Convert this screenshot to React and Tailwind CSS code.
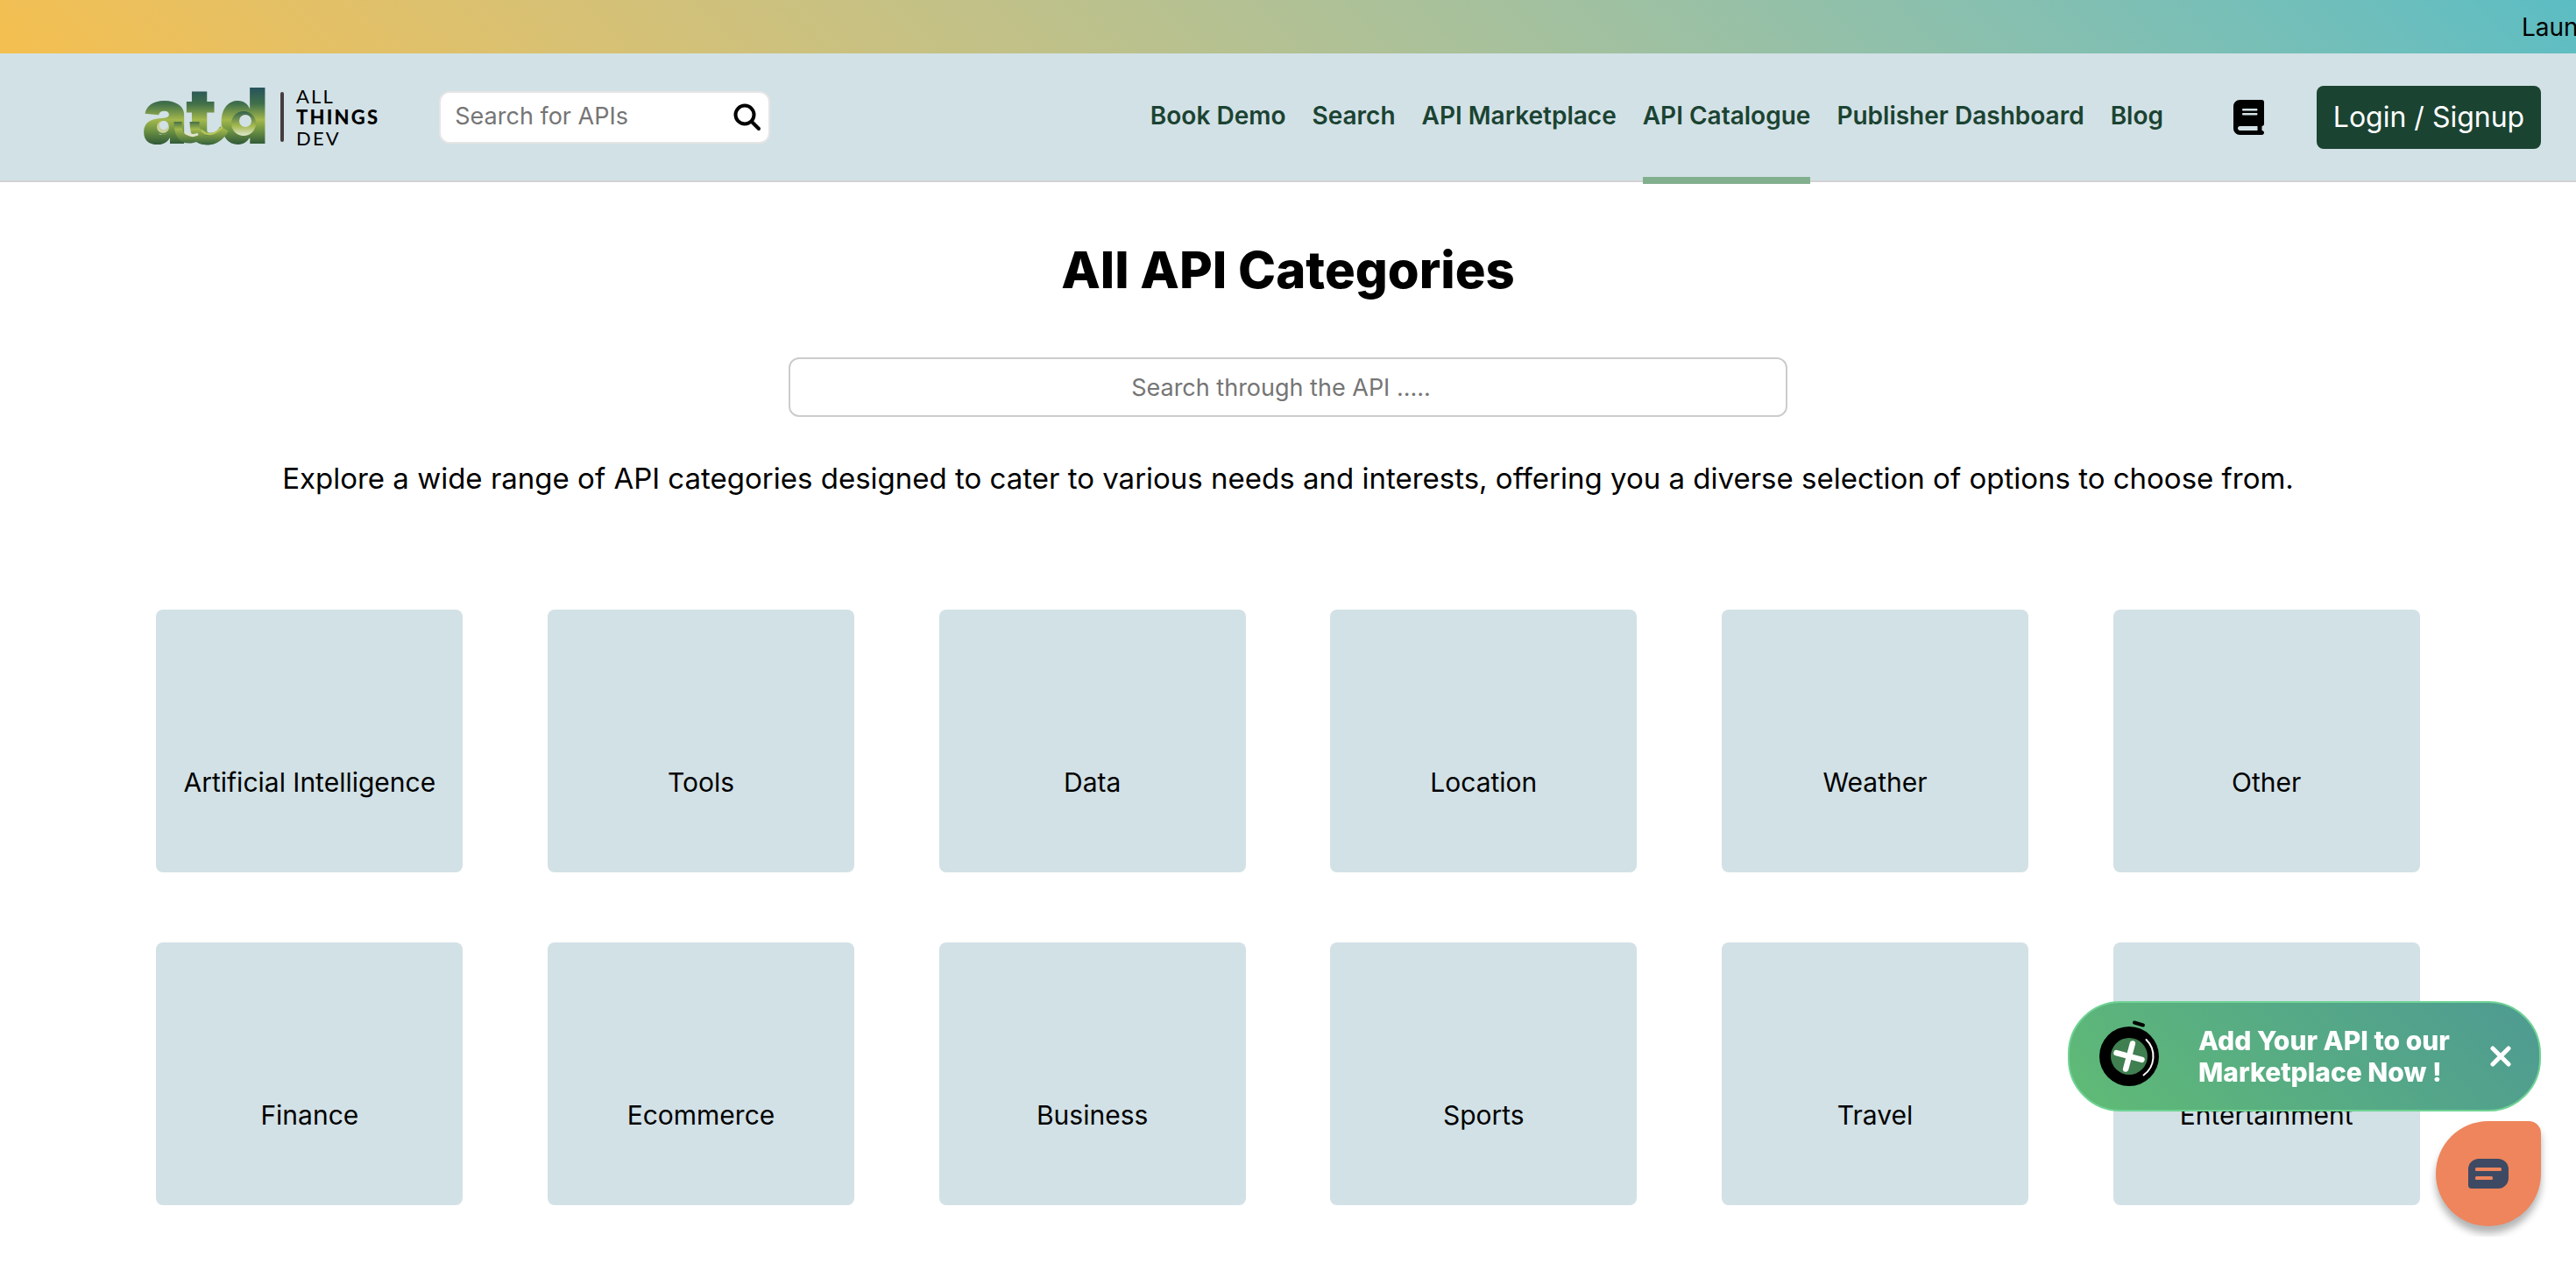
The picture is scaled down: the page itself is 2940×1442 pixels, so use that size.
import { FaBook } from "react-icons/fa6";

const links = ["Book Demo", "Search", "API Marketplace", "API Catalogue", "Publisher Dashboard", "Blog"];

const categories = [
  "Artificial Intelligence", "Tools", "Data", "Location", "Weather", "Other",
  "Finance", "Ecommerce", "Business", "Sports", "Travel", "Entertainment",
];

function Logo() {
  return (
    <a href="#" aria-label="All Things Dev" className="flex shrink-0 items-center">
      <svg viewBox="0 0 148 70" className="h-[70px] w-[148px] overflow-visible" aria-hidden="true">
        <defs>
          <linearGradient id="mark" x1="0" y1="0" x2="0" y2="70" gradientUnits="userSpaceOnUse">
            <stop offset="0" stopColor="#24515c" />
            <stop offset="0.28" stopColor="#41704a" />
            <stop offset="0.54" stopColor="#a3b84c" />
            <stop offset="0.72" stopColor="#6c9142" />
            <stop offset="1" stopColor="#1f4a36" />
          </linearGradient>
          <linearGradient id="hook" x1="0" y1="38" x2="0" y2="68" gradientUnits="userSpaceOnUse">
            <stop offset="0" stopColor="#2f5f45" />
            <stop offset="0.35" stopColor="#a3b84c" />
            <stop offset="1" stopColor="#2a5a3a" />
          </linearGradient>
          <linearGradient id="hole" x1="0" y1="27" x2="0" y2="56" gradientUnits="userSpaceOnUse">
            <stop offset="0" stopColor="#2b5b50" />
            <stop offset="0.6" stopColor="#a3b84c" />
            <stop offset="1" stopColor="#dfe6cf" />
          </linearGradient>
        </defs>
        <text y="65" x="2 52 90" fontFamily="Inter, sans-serif" fontWeight="900" fontSize="88" fill="url(#mark)">atd</text>
        <path d="M43 40C43 55 48 61 58 60C65 59 70 56 73 50" fill="none" stroke="url(#hook)" strokeWidth="9" />
        <path d="M62 40C62 56 68 62 78 61C87 60 92 55 96 48" fill="none" stroke="url(#hook)" strokeWidth="11" />
        <path d="M52 52Q58 58 66 54" fill="none" stroke="#dfe3cb" strokeWidth="3" />
        <path d="M70 50Q80 60 94 46" fill="none" stroke="#b6c65f" strokeWidth="2" />
        <circle cx="26" cy="46" r="9" fill="url(#mark)" />
        <circle cx="26" cy="46" r="7" fill="#c8d09b" />
        <circle cx="27" cy="44" r="5" fill="#d2e1e6" />
        <circle cx="118" cy="42" r="18" fill="url(#mark)" />
        <circle cx="118" cy="42" r="14" fill="url(#hole)" />
        <circle cx="120" cy="39" r="7" fill="#d2e1e6" />
      </svg>
      <span className="ml-3 h-[57px] w-1 rounded-full bg-[#463c3e]" />
      <span className="ml-[14px] flex flex-col font-[Lato,sans-serif] text-[22px] leading-6 tracking-widest">
        <span>ALL</span>
        <span className="font-black">THINGS</span>
        <span>DEV</span>
      </span>
    </a>
  );
}

function SearchIcon() {
  return (
    <svg viewBox="0 0 32 32" className="size-8" fill="none" stroke="currentColor" strokeWidth="4" strokeLinecap="round" aria-hidden="true">
      <circle cx="13" cy="13" r="10.5" />
      <path d="M21 21l8 8" />
    </svg>
  );
}

function AddBadge() {
  return (
    <svg viewBox="0 0 70 92" className="h-[92px] w-[70px]" fill="none" strokeLinecap="round" aria-hidden="true">
      <path d="M41 7.5l10 3" stroke="#000" strokeWidth="4" />
      <circle cx="35" cy="46" r="34" fill="#000" />
      <circle cx="35" cy="46" r="21" fill="#3f7f50" />
      <path d="M54.5 27A26.5 26.5 0 0 1 51.5 67.5" stroke="#fff" strokeWidth="2" />
      <g stroke="#fff" strokeWidth="6.5" transform="rotate(15 35 46)">
        <path d="M35 31v30M20 46h30" />
      </g>
    </svg>
  );
}

export default function App() {
  return (
    <div className="min-h-screen overflow-x-hidden bg-white font-[Inter,sans-serif] text-black">
      <div className="flex h-[61px] items-center justify-end overflow-hidden bg-linear-45 from-[#f4bf4f] to-[#5bbdc3]">
        <p className="w-[62px] whitespace-nowrap text-[28px]">Laun</p>
      </div>
      <header className="flex h-[147px] items-center border-b-2 border-[#d3d3d3] bg-[#d2e1e6] pr-10 pl-40">
        <Logo />
        <form className="ml-[68px] flex h-[60px] w-[378px] items-center rounded-xl border-2 border-[#e5e5e5] bg-white pr-2 pl-4">
          <input aria-label="Search for APIs" placeholder="Search for APIs" className="min-w-0 flex-1 text-[27px] outline-none placeholder:text-[#757575]" />
          <button type="button" aria-label="Search"><SearchIcon /></button>
        </form>
        <nav className="ml-auto flex items-stretch gap-[30px] self-stretch text-[28px] font-semibold text-[#1b4332]">
          {links.map((label) => (
            <a
              key={label}
              href="#"
              className={
                label === "API Catalogue"
                  ? "relative flex items-center pb-1 after:absolute after:inset-x-0 after:-bottom-1 after:h-2 after:bg-[#82b08f]"
                  : "flex items-center pb-1"
              }
            >
              {label}
            </a>
          ))}
        </nav>
        <a href="#" aria-label="Documentation" className="ml-20"><FaBook className="h-10 w-[35px]" /></a>
        <button type="button" className="ml-[60px] h-[72px] w-64 rounded-lg bg-[#1b4332] text-[32px] whitespace-nowrap text-white">Login / Signup</button>
      </header>
      <main className="flex flex-col items-center">
        <h1 className="mt-16 text-[58px] leading-[72px] font-extrabold">All API Categories</h1>
        <input aria-label="Search through the API" placeholder="Search through the API ....." className="mt-16 h-[68px] w-[1140px] max-w-full rounded-xl border-2 border-[#cccccc] pr-4 text-center text-[27px] placeholder:text-[#757575]" />
        <p className="mt-[46px] text-center text-[33px] leading-12">Explore a wide range of API categories designed to cater to various needs and interests, offering you a diverse selection of options to choose from.</p>
        <ul className="mt-[126px] grid w-full grid-cols-6 justify-items-center gap-y-20 px-[130px]">
          {categories.map((name) => (
            <li key={name} className="w-[350px]">
              <a href="#" className="flex h-[300px] items-end justify-center rounded-lg bg-[#d2e1e6] pb-20 text-[30px]">{name}</a>
            </li>
          ))}
        </ul>
      </main>

      <aside className="fixed right-7 bottom-[30px] flex flex-col items-end">
        <div className="mr-3 flex h-[126px] w-[540px] items-center rounded-[60px] border-2 border-[#6fd394] bg-linear-45 from-[#60bb74] to-[#4e9a92] pr-8 pl-[33px]">
          <AddBadge />
          <a href="#" className="ml-11 text-[30px] leading-9 font-extrabold whitespace-nowrap text-white">
            Add Your API to our
            <br />
            Marketplace Now !
          </a>
          <button type="button" aria-label="Close" className="ml-auto text-white">
            <svg viewBox="0 0 24 24" className="size-6" stroke="currentColor" strokeWidth="5" strokeLinecap="round" aria-hidden="true">
              <path d="M3 3l18 18M21 3L3 21" />
            </svg>
          </button>
        </div>
        <div className="overflow-hidden px-3 pt-[11px] pb-3">
          <button type="button" aria-label="Open chat" className="flex size-[120px] items-center justify-center rounded-[60px] rounded-tr-[14px] bg-[#ee855c] shadow-[0_8px_8px_rgba(0,0,0,0.3)]">
            <svg viewBox="0 0 46 34" className="h-[34px] w-[46px]" aria-hidden="true">
              <path d="M12 0H34A12 12 0 0 1 46 12V22A12 12 0 0 1 34 34H4A4 4 0 0 1 0 30V12A12 12 0 0 1 12 0Z" fill="#3e4a64" />
              <rect x="8" y="10" width="30" height="4" rx="1.5" fill="#ee855c" />
              <rect x="8" y="20" width="20" height="4" rx="1.5" fill="#ee855c" />
            </svg>
          </button>
        </div>
      </aside>
    </div>
  );
}
